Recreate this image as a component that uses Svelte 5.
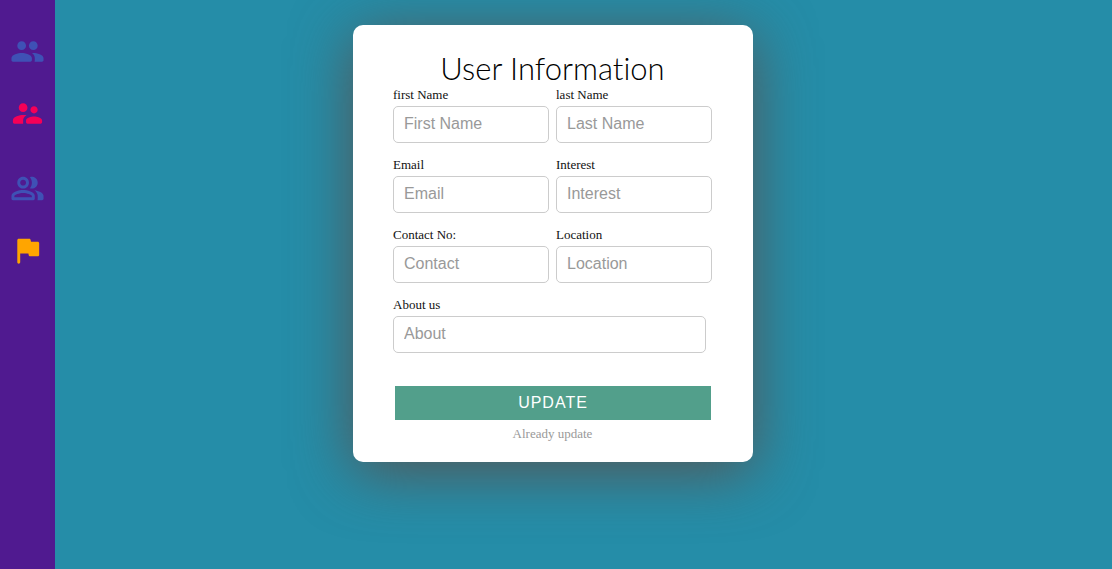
<script>
  const groups = [
    [
      {
        label: 'People',
        color: '#3f51b5',
        path: 'M16 11c1.66 0 2.99-1.34 2.99-3S17.66 5 16 5s-3 1.34-3 3 1.34 3 3 3zm-8 0c1.66 0 2.99-1.34 2.99-3S9.66 5 8 5 5 6.34 5 8s1.34 3 3 3zm0 2c-2.33 0-7 1.17-7 3.5V18c0 .55.45 1 1 1h12c.55 0 1-.45 1-1v-1.5c0-2.33-4.67-3.5-7-3.5zm8 0c-.29 0-.62.02-.97.05.02.01.03.03.04.04 1.14.83 1.93 1.94 1.93 3.41V18c0 .35-.07.69-.18 1H22c.55 0 1-.45 1-1v-1.5c0-2.33-4.67-3.5-7-3.5z'
      },
      {
        label: 'Supervisors',
        color: '#f50057',
        path: 'M16.5 12c1.38 0 2.49-1.12 2.49-2.5S17.88 7 16.5 7 14 8.12 14 9.5s1.12 2.5 2.5 2.5zM9 11c1.66 0 2.99-1.34 2.99-3S10.66 5 9 5 6 6.34 6 8s1.34 3 3 3zm7.5 3c-1.83 0-5.5.92-5.5 2.75V18c0 .55.45 1 1 1h9c.55 0 1-.45 1-1v-1.25c0-1.83-3.67-2.75-5.5-2.75zM9 13c-2.33 0-7 1.17-7 3.5V18c0 .55.45 1 1 1h6v-2.25c0-.85.33-2.34 2.37-3.47C10.5 13.1 9.66 13 9 13z'
      }
    ],
    [
      {
        label: 'Contacts',
        color: '#3f51b5',
        path: 'M16.67 13.13C18.04 14.06 19 15.32 19 17v2c0 .35-.07.69-.18 1H22c.55 0 1-.45 1-1v-2c0-2.18-3.57-3.47-6.33-3.87zM15 12c2.21 0 4-1.79 4-4s-1.79-4-4-4c-.47 0-.91.1-1.33.24C14.5 5.27 15 6.58 15 8s-.5 2.73-1.33 3.76c.42.14.86.24 1.33.24zM9 12c2.21 0 4-1.79 4-4s-1.79-4-4-4-4 1.79-4 4 1.79 4 4 4zm0-6c1.1 0 2 .9 2 2s-.9 2-2 2-2-.9-2-2 .9-2 2-2zM9 13c-2.67 0-8 1.34-8 4v2c0 .55.45 1 1 1h14c.55 0 1-.45 1-1v-2c0-2.66-5.33-4-8-4zm6 5H3v-.99C3.2 16.29 6.3 15 9 15s5.8 1.29 6 2v1z'
      },
      {
        label: 'Flagged',
        color: '#ffa500',
        path: 'M14.4 6l-.24-1.2c-.09-.46-.5-.8-.98-.8H6c-.55 0-1 .45-1 1v15c0 .55.45 1 1 1s1-.45 1-1v-6h5.6l.24 1.2c.09.47.5.8.98.8H19c.55 0 1-.45 1-1V7c0-.55-.45-1-1-1h-4.6z'
      }
    ]
  ];

  const fields = [
    { id: 'first-name', label: 'first Name', placeholder: 'First Name' },
    { id: 'last-name', label: 'last Name', placeholder: 'Last Name' },
    { id: 'email', label: 'Email', placeholder: 'Email', type: 'email' },
    { id: 'interest', label: 'Interest', placeholder: 'Interest' },
    { id: 'contact', label: 'Contact No:', placeholder: 'Contact', type: 'tel' },
    { id: 'location', label: 'Location', placeholder: 'Location' },
    { id: 'about', label: 'About us', placeholder: 'About', wide: true }
  ];
</script>

<div class="page">
  <nav class="sidebar">
    {#each groups as group}
      <div class="group">
        {#each group as item}
          <a href="#top" aria-label={item.label}>
            <svg viewBox="0 0 24 24" fill={item.color} aria-hidden="true"><path d={item.path} /></svg>
          </a>
        {/each}
      </div>
    {/each}
  </nav>

  <main>
    <form class="card" onsubmit={(e) => e.preventDefault()}>
      <h1>User Information</h1>
      <div class="fields">
        {#each fields as field}
          <div class="field" class:wide={field.wide}>
            <label for={field.id}>{field.label}</label>
            <input id={field.id} type={field.type ?? 'text'} placeholder={field.placeholder} />
          </div>
        {/each}
      </div>
      <button type="submit">UPDATE</button>
      <a class="note" href="#top">Already update</a>
    </form>
  </main>
</div>

<style>
  :global(body) {
    margin: 0;
    background: #258da8;
  }

  .page {
    display: flex;
    min-height: 100vh;
    font-family: 'Liberation Serif', 'Times New Roman', serif;
  }

  .sidebar {
    flex: 0 0 55px;
    display: flex;
    flex-direction: column;
    align-items: center;
    gap: 40px;
    padding-top: 34px;
    box-sizing: border-box;
    background: #501a90;
  }

  .group {
    display: flex;
    flex-direction: column;
    gap: 27px;
  }

  .group a,
  .group svg {
    display: block;
    width: 35px;
    height: 35px;
  }

  main {
    flex: 1;
    display: flex;
    justify-content: center;
    align-items: flex-start;
    padding: 25px 61px 25px 0;
  }

  .card {
    display: flex;
    flex-direction: column;
    width: 100%;
    max-width: 400px;
    box-sizing: border-box;
    padding: 24px 41px 20px 40px;
    border-radius: 10px;
    background: #fff;
    box-shadow: 0 10px 60px #555;
  }

  h1 {
    margin: 0;
    font: 300 31px/38px Lato, 'Open Sans', sans-serif;
    font-variant-ligatures: none;
    text-align: center;
    color: #000;
  }

  .fields {
    display: grid;
    grid-template-columns: 1fr 1fr;
    gap: 14px 7px;
  }

  .field {
    display: flex;
    flex-direction: column;
    gap: 4px;
    min-width: 0;
  }

  .wide {
    grid-column: 1 / -1;
    margin-right: 6px;
  }

  label {
    font-size: 13px;
    line-height: 15px;
    color: #111;
  }

  input {
    width: 100%;
    height: 37px;
    box-sizing: border-box;
    padding: 0 10px 2px;
    border: 1px solid #ccc;
    border-radius: 5px;
    background: #fff;
    font: 16px 'Liberation Sans', Arial, sans-serif;
    color: #333;
  }

  input::placeholder {
    color: #999;
    opacity: 1;
  }

  button {
    height: 34px;
    margin: 33px 1px 0 2px;
    padding: 0;
    border: 0;
    background: #529f8b;
    font: 16px 'Liberation Sans', Arial, sans-serif;
    letter-spacing: 1px;
    color: #fff;
    cursor: pointer;
  }

  .note {
    align-self: center;
    margin: 6px 0 1px;
    font-size: 13px;
    line-height: 15px;
    color: #999;
    text-decoration: none;
  }
</style>
